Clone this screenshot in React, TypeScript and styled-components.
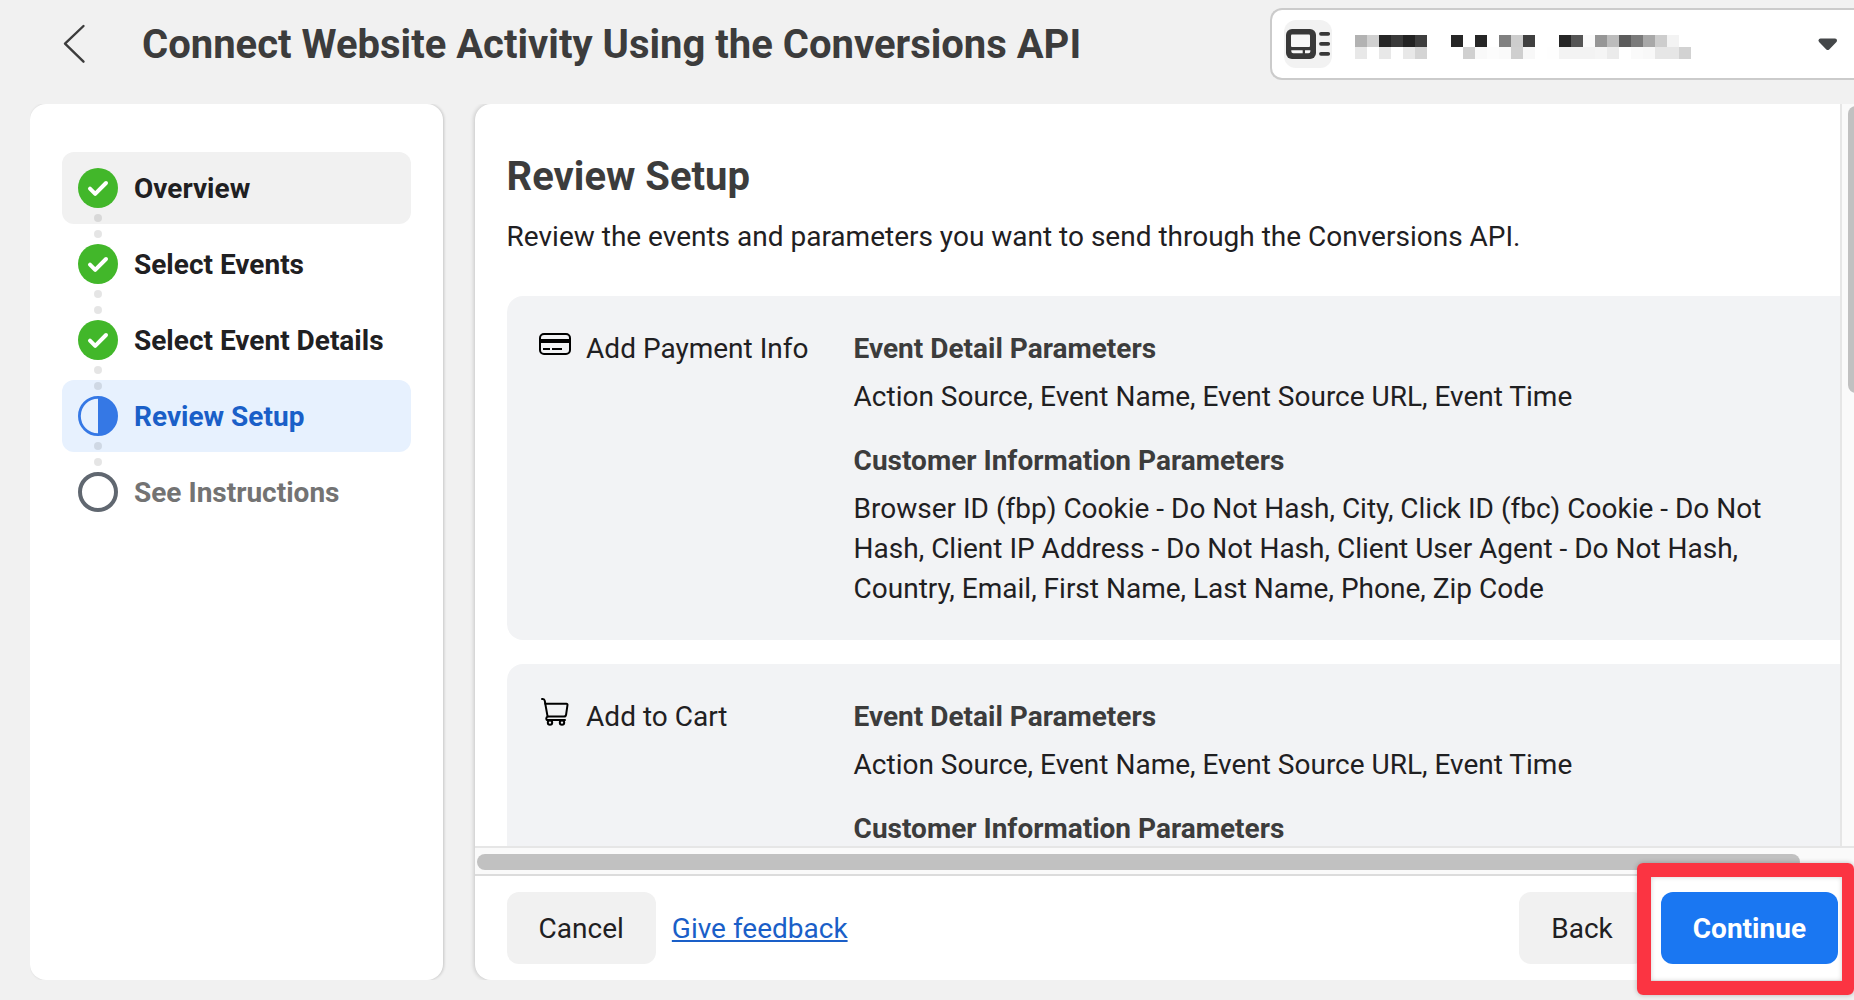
import React from "react";
import styled, { createGlobalStyle, css } from "styled-components";

const GlobalStyle = createGlobalStyle`
  *, *::before, *::after { box-sizing: border-box; }
  body {
    margin: 0;
    overflow: hidden;
    background: #f1f1f1;
    color: #1f2022;
    font-family: Roboto, "Liberation Sans", sans-serif;
    font-size: 28px;
    line-height: 40px;
  }
  h1, h2, h3, p, ol { margin: 0; padding: 0; }
`;

const Page = styled.div`
  display: flex;
  flex-direction: column;
  width: 1854px;
  height: 1000px;
  overflow: hidden;
`;

const Header = styled.header`
  display: flex;
  flex: none;
  align-items: flex-start;
  height: 104px;
  padding: 8px 0 0 62px;
`;

const BackLink = styled.button`
  display: flex;
  width: 24px;
  height: 72px;
  margin-right: 56px;
  padding: 0;
  align-items: center;
  border: 0;
  background: none;
`;

const PageTitle = styled.h1`
  flex: 1;
  padding-top: 13px;
  color: #3c3c3c;
  font-size: 40px;
  font-weight: 700;
  line-height: 48px;
  white-space: nowrap;
`;

const AccountSelect = styled.div`
  display: flex;
  flex: none;
  align-items: center;
  width: 584px;
  height: 72px;
  padding: 0 15px 0 12px;
  border: 2px solid #cbcbcb;
  border-right: 0;
  border-radius: 12px 0 0 12px;
  background: #fff;
`;

const AccountIcon = styled.div`
  display: flex;
  width: 48px;
  height: 48px;
  margin-right: 23px;
  border-radius: 12px;
  background: #f2f2f2;
`;

const Redacted = styled.div`
  display: grid;
  grid-template-columns: repeat(28, 12px);
  grid-auto-rows: 12px;
  margin: 6px auto 0 0;
`;

const Block = styled.span<{ $tone: string }>`
  background: #${(p) => p.$tone};
`;

const Body = styled.div`
  display: flex;
  flex: none;
  gap: 32px;
  height: 876px;
  padding-left: 30px;
`;

const Sidebar = styled.nav`
  flex: none;
  width: 413px;
  padding: 48px 32px;
  border-radius: 16px;
  background: #fff;
  box-shadow: 1px 0 3px rgba(0, 0, 0, 0.18);
  clip-path: inset(0 -10px 0 0);
`;

const StepList = styled.ol`
  display: flex;
  flex-direction: column;
  gap: 4px;
  list-style: none;
`;

type StepState = "done" | "current" | "todo";

const Step = styled.li<{ $state: StepState; $hover?: boolean }>`
  position: relative;
  display: flex;
  align-items: center;
  gap: 16px;
  height: 72px;
  padding-left: 16px;
  border-radius: 12px;
  font-weight: 700;
  white-space: nowrap;
  ${(p) => p.$hover && css`background: #f1f1f1;`}
  ${(p) => p.$state === "current" && css`background: #e7f1fe; color: #1a5fc8;`}
  ${(p) => p.$state === "todo" && css`color: #737373;`}
`;

const StepLabel = styled.span`
  padding-top: 2px;
`;

const Dots = styled.span`
  position: absolute;
  z-index: 1;
  left: 32px;
  top: 62px;
  display: flex;
  flex-direction: column;
  gap: 8px;

  &::before, &::after {
    content: "";
    width: 8px;
    height: 8px;
    border-radius: 50%;
    background: rgba(0, 0, 0, 0.1);
  }
`;

const Main = styled.main`
  position: relative;
  z-index: 0;
  display: flex;
  flex: 1;
  flex-direction: column;
  min-width: 0;
  border-radius: 16px 0 0 16px;
  background: #fff;

  /* side shadow only: nothing spills above or below the panel */
  &::before {
    content: "";
    position: absolute;
    z-index: -1;
    inset: 0;
    border-radius: inherit;
    box-shadow: -1px 0 4px rgba(0, 0, 0, 0.18);
    clip-path: inset(0 0 0 -10px);
  }
`;

const ScrollArea = styled.div`
  display: grid;
  flex: none;
  grid-template: 742px 30px / 1fr 14px;
  height: 772px;
  overflow: hidden;
  border-top-left-radius: 16px;
`;

const Viewport = styled.section`
  overflow: hidden;
  padding: 49px 0 0 31.6px;
`;

const VerticalTrack = styled.div`
  padding: 2px 0 0 6px;
  border-left: 2px solid #e6e6e6;
  background: #fafafa;
`;

const VerticalThumb = styled.div`
  width: 16px;
  height: 287px;
  border-radius: 8px;
  background: #c1c1c1;
`;

const HorizontalTrack = styled.div`
  grid-column: 1 / -1;
  padding: 6px 2px;
  border-top: 2px solid #e6e6e6;
  border-bottom: 2px solid #dcdcdc;
  background: #fafafa;
`;

const HorizontalThumb = styled.div`
  width: 1323px;
  height: 16px;
  border-radius: 8px;
  background: #c1c1c1;
`;

const SectionTitle = styled.h2`
  margin-bottom: 16px;
  color: #3c3c3c;
  font-size: 40px;
  font-weight: 700;
  line-height: 48px;
`;

const Lead = styled.p`
  margin-bottom: 39px;
`;

const EventCard = styled.article`
  display: grid;
  grid-template-columns: 32px 252px 924px;
  column-gap: 15.5px;
  height: 344px;
  margin-bottom: 24px;
  padding: 33px 32px 31px;
  border-radius: 16px 0 0 16px;
  background: #f2f3f5;
`;

const EventIcon = styled.svg`
  width: 32px;
  height: 32px;
  margin-top: -1px;
  fill: none;
  stroke: #000;
  stroke-width: 2;
`;

const ParamGroup = styled.div`
  display: flex;
  flex-direction: column;
  gap: 8px;
  margin-bottom: 24px;
`;

const ParamTitle = styled.h3`
  color: #3c3c3c;
  font-size: 28px;
  font-weight: 700;
  line-height: 40px;
`;

const Footer = styled.footer`
  display: flex;
  flex: 1;
  align-items: center;
  gap: 16px;
  padding: 0 16px 0 31.6px;
`;

const Button = styled.button<{ $primary?: boolean }>`
  height: 72px;
  padding: 2px 32px 0;
  border: 0;
  border-radius: 12px;
  background: ${(p) => (p.$primary ? "#1a77f2" : "#f1f1f1")};
  color: ${(p) => (p.$primary ? "#fff" : "#1f2022")};
  font: ${(p) => (p.$primary ? 700 : 400)} 28px/40px Roboto, "Liberation Sans", sans-serif;
`;

const FeedbackLink = styled.a`
  margin-right: auto;
  padding-top: 2px;
  color: #1a5fc8;
  text-decoration: underline;
  text-decoration-thickness: 1.5px;
  text-underline-offset: 2px;
  text-decoration-skip-ink: none;
`;

const ContinueSlot = styled.div`
  position: relative;
  display: flex;
`;

const Highlight = styled.span`
  position: absolute;
  left: -24px;
  top: -29px;
  width: 217px;
  height: 132px;
  border: 14px solid #fb3442;
  border-right-width: 12px;
  border-radius: 6px;
  box-shadow: 0 0 5px rgba(0, 0, 0, 0.25), inset 0 0 5px rgba(0, 0, 0, 0.18);
`;

const TONES = [
  ["b2b2b2", "d0d0d0", "262626", "3a3a3a", "222222", "3e3e3e", "fff", "fff", "262626", "fff", "262626", "fff", "808080", "cdcdcd", "404040", "fff", "fff", "262626", "555555", "fafafa", "969696", "bcbcbc", "5c5c5c", "7a7a7a", "a8a8a8", "cdcdcd", "f3f3f3", "fff"],
  ["e8e8e8", "fff", "e8e8e8", "fff", "e8e8e8", "d4d4d4", "fff", "fff", "fff", "d0d0d0", "f9f9f9", "fcfcfc", "fafafa", "cfcfcf", "f8f8f8", "fff", "fefefe", "f3f3f3", "f3f3f3", "f3f3f3", "f5f5f5", "ebebeb", "fff", "fafafa", "f8f8f8", "e6e6e6", "e6e6e6", "d2d2d2"],
].flat();

function StepBadge({ state }: { state: StepState }) {
  return (
    <svg width="40" height="40" viewBox="0 0 40 40" fill="none">
      {state === "done" && (
        <>
          <circle cx="20" cy="20" r="20" fill="#42b72a" />
          <path d="M12 20.6l5.2 5.2L28 15" stroke="#fff" strokeWidth="4" strokeLinecap="round" strokeLinejoin="round" />
        </>
      )}
      {state === "current" && (
        <>
          <circle cx="20" cy="20" r="18.6" stroke="#3578e5" strokeWidth="2.8" />
          <path d="M20 1a19 19 0 0 1 0 38z" fill="#3578e5" />
        </>
      )}
      {state === "todo" && <circle cx="20" cy="20" r="18" fill="#fff" stroke="#606770" strokeWidth="4" />}
    </svg>
  );
}

const CardIcon = () => (
  <EventIcon viewBox="0 0 32 32">
    <rect x="1" y="6" width="30" height="20" rx="4" />
    <path d="M1 13h30" strokeWidth="4" />
    <path d="M4 21h7M13 21h10" />
  </EventIcon>
);

const CartIcon = () => (
  <EventIcon viewBox="0 0 32 32" strokeLinecap="round" strokeLinejoin="round">
    <path d="M3 3h.8c1.2 0 1.8.8 2 1.9l.5 3L8.6 20.6" />
    <path d="M6.3 7.8h21.2c.7 0 1.1.5 1 1.1l-1.4 9.7c-.2 1.3-1 2-2.2 2H8.6c-1.7.4-1.9 3.4.2 3.4H26" />
    <circle cx="11" cy="26.6" r="2.2" />
    <circle cx="23" cy="26.6" r="2.2" />
  </EventIcon>
);

const steps: { label: string; state: StepState; hover?: boolean }[] = [
  { label: "Overview", state: "done", hover: true },
  { label: "Select Events", state: "done" },
  { label: "Select Event Details", state: "done" },
  { label: "Review Setup", state: "current" },
  { label: "See Instructions", state: "todo" },
];

const DETAILS = "Action Source, Event Name, Event Source URL, Event Time";
const CUSTOMER =
  "Browser ID (fbp) Cookie - Do Not Hash, City, Click ID (fbc) Cookie - Do Not Hash, Client IP Address - Do Not Hash, Client User Agent - Do Not Hash, Country, Email, First Name, Last Name, Phone, Zip Code";

const events = [
  { name: "Add Payment Info", Icon: CardIcon, customer: CUSTOMER },
  { name: "Add to Cart", Icon: CartIcon, customer: null },
];

export default function App() {
  return (
    <Page>
      <GlobalStyle />
      <Header>
        <BackLink aria-label="Back">
          <svg width="24" height="40" viewBox="0 0 24 40" fill="none" stroke="#3c3c3c" strokeWidth="2.4" strokeLinecap="round" strokeLinejoin="round">
            <path d="M21.500 2L3 19.700l18.500 18" />
          </svg>
        </BackLink>
        <PageTitle>Connect Website Activity Using the Conversions API</PageTitle>
        <AccountSelect>
          <AccountIcon>
            <svg width="48" height="48" viewBox="0 0 48 48" fill="none">
              <rect x="2" y="9" width="30" height="30" rx="6" fill="#383838" />
              <rect x="7" y="14.500" width="19" height="12.500" rx="1" fill="#f7f7f7" />
              <path d="M7.300 30.300h11.400v3h-9.400q-2 0-2-2zM21 30.300h5.400v1q0 2-2 2H21z" fill="#f7f7f7" />
              <path d="M37 13.800h7.200M37 23.800h7.200M37 33.800h7.200" stroke="#383838" strokeWidth="3.800" strokeLinecap="round" />
            </svg>
          </AccountIcon>
          <Redacted>
            {TONES.map((tone, i) => (
              <Block key={i} $tone={tone} />
            ))}
          </Redacted>
          <svg width="22" height="14" viewBox="0 0 22 14">
            <path d="M3.500 3.500h14.500l-7.250 7.500z" fill="#444749" stroke="#444749" strokeWidth="4" strokeLinejoin="round" />
          </svg>
        </AccountSelect>
      </Header>
      <Body>
        <Sidebar>
          <StepList>
            {steps.map((s, i) => (
              <Step key={s.label} $state={s.state} $hover={s.hover}>
                <StepBadge state={s.state} />
                <StepLabel>{s.label}</StepLabel>
                {i < steps.length - 1 && <Dots />}
              </Step>
            ))}
          </StepList>
        </Sidebar>
        <Main>
          <ScrollArea>
            <Viewport>
              <SectionTitle>Review Setup</SectionTitle>
              <Lead>Review the events and parameters you want to send through the Conversions API.</Lead>
              {events.map(({ name, Icon, customer }) => (
                <EventCard key={name}>
                  <Icon />
                  <span>{name}</span>
                  <div>
                    <ParamGroup>
                      <ParamTitle>Event Detail Parameters</ParamTitle>
                      <p>{DETAILS}</p>
                    </ParamGroup>
                    <ParamGroup>
                      <ParamTitle>Customer Information Parameters</ParamTitle>
                      {customer && <p>{customer}</p>}
                    </ParamGroup>
                  </div>
                </EventCard>
              ))}
            </Viewport>
            <VerticalTrack>
              <VerticalThumb />
            </VerticalTrack>
            <HorizontalTrack>
              <HorizontalThumb />
            </HorizontalTrack>
          </ScrollArea>
          <Footer>
            <Button>Cancel</Button>
            <FeedbackLink>Give feedback</FeedbackLink>
            <Button>Back</Button>
            <ContinueSlot>
              <Button $primary>Continue</Button>
              <Highlight />
            </ContinueSlot>
          </Footer>
        </Main>
      </Body>
    </Page>
  );
}
